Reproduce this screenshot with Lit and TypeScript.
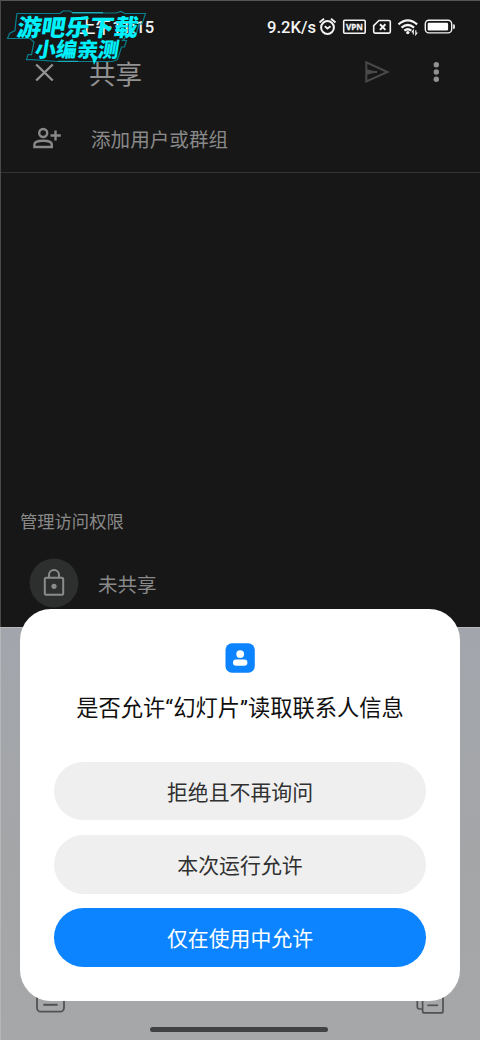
import { LitElement, html, css } from "lit";
import { customElement } from "lit/decorators.js";

@customElement("status-bar")
class StatusBar extends LitElement {
  static styles = css`
    :host { display: flex; height: 52px; box-sizing: border-box; padding: 0 24px 0 78px; align-items: center; justify-content: space-between; color: #f4f4f4; font: 500 16.6px/22px Roboto, "Noto Sans CJK SC", sans-serif; white-space: nowrap; }
    .right { display: flex; align-items: center; }
    .label { padding-top: 2px; }
    .icons { display: block; width: 140px; height: 24px; }
    .vpn { font: 700 9px "Noto Sans", sans-serif; }
  `;
  render() {
    return html`
      <span class="label">上午11:15</span>
      <div class="right">
        <span class="label">9.2K/s</span>
        <svg class="icons" viewBox="316 15 140 24" fill="none" stroke="#f4f4f4" stroke-width="1.6">
          <circle cx="327.5" cy="27.5" r="6.4" stroke-width="2" />
          <path d="M319.500 22.500l4.500-3.800M335.500 22.500l-4.500-3.800M324.800 26.300l2.700 2.200 3-2.200" stroke-width="1.800" />
          <rect x="343.7" y="20.200" width="21.5" height="13" rx="1" />
          <text class="vpn" x="346" y="30" textLength="17" lengthAdjust="spacingAndGlyphs" fill="#f4f4f4" stroke="#f4f4f4" stroke-width=".3">VPN</text>
          <path d="M379 20.5h10q1.3 0 1.3 1.3v10q0 1.3-1.3 1.3h-14q-1.3 0-1.3-1.3v-6.100z" />
          <path d="M380 24.300l5.400 5.600M385.400 24.300l-5.400 5.600" stroke-width="2" />
          <path d="M398.500 24.400q9.300-8.200 18.600 0M401.500 27.700q6.300-5.400 12.600 0M404.300 30.700q3.500-2.900 7 0" stroke-width="2.200" />
          <circle cx="407.8" cy="32.6" r="1.7" fill="#f4f4f4" stroke="none" />
          <path d="M413.3 34.6v-4.2l-1.5 2M415.8 30.3v4.2l1.5-2" stroke-width="1.1" />
          <rect x="425.3" y="20.3" width="26.4" height="12.6" rx="3.6" stroke-width="1.4" />
          <rect x="427.7" y="22.7" width="20.4" height="7.9" rx="1.3" fill="#fff" stroke="none" />
          <path d="M453 24.3q2 0 2 1v2.8q0 1-2 1z" fill="#d8d8d8" stroke="none" />
        </svg>
      </div>`;
  }
}

@customElement("share-page")
class SharePage extends LitElement {
  static styles = css`
    :host { display: flex; flex-direction: column; height: 627px; box-sizing: border-box; background: #171717; color: #898989; border-left: 1px solid #4a4a4a; border-top: 1px solid #555; font-family: "Noto Sans CJK SC", sans-serif; }
    svg { display: block; flex: none; }
    .bar { display: flex; height: 40px; align-items: center; padding: 0 31px 2px 32px; box-sizing: border-box; }
    .title { font-size: 26.6px; line-height: 38px; margin-left: 32px; padding-top: 2px; flex: 1; color: #929292; }
    .more { margin-left: 35px; }
    .add { display: flex; height: 80px; box-sizing: border-box; align-items: center; padding: 11px 32px 0; border-bottom: 1px solid #333; font-size: 19.6px; }
    .add span { margin-left: 29px; }
    .space { flex: 1; }
    .heading { padding-left: 19px; font-size: 17.3px; line-height: 26px; }
    .access { display: flex; align-items: center; height: 93px; box-sizing: border-box; padding: 5px 28px 0; font-size: 19.5px; }
    .access span { margin-left: 19px; padding-top: 1px; }
  `;
  render() {
    return html`
      <status-bar></status-bar>
      <div class="bar">
        <svg width="24" height="24" viewBox="0 0 24 24" stroke="#929292" stroke-width="2.4"><path d="M3.2 4.500l16.500 16M19.700 4.500l-16.500 16" /></svg>
        <span class="title">共享</span>
        <svg width="26" height="24" viewBox="0 0 26 24" fill="none" stroke="#494949" stroke-width="2"><path d="M2.3 2.400v19L23.5 12zM3 12h10" /><path d="M3 9.200l11 2.800-11 2.800z" fill="#494949" stroke="none" /></svg>
        <svg class="more" width="24" height="24" viewBox="0 0 24 24" fill="#929292"><circle cx="11.3" cy="4.800" r="2.7" /><circle cx="11.3" cy="12" r="2.7" /><circle cx="11.3" cy="19.300" r="2.7" /></svg>
      </div>
      <div class="add">
        <svg width="29" height="24" viewBox="33 126 29 24" fill="none" stroke="#898989" stroke-width="2.4"><circle cx="43.2" cy="133" r="4" /><path d="M34.4 147v-2.400c0-5.200 17.400-5.200 17.400 0v2.400zM55.500 130.500v10M50.500 135.500h10.300" /></svg>
        <span>添加用户或群组</span>
      </div>
      <div class="space"></div>
      <div class="heading">管理访问权限</div>
      <div class="access">
        <svg width="50" height="50" viewBox="0 0 50 50" fill="none" stroke="#8b8b8b" stroke-width="2"><circle cx="25" cy="25" r="24.4" fill="#2d2f2e" stroke="none" /><rect x="15.800" y="19.700" width="18.400" height="17" rx="1.5" /><path d="M20 19.500v-2.500a5 5 0 0 1 10 0v2.500" /><circle cx="25" cy="28.300" r="2.6" fill="#8b8b8b" stroke="none" /></svg>
        <span>未共享</span>
      </div>`;
  }
}

@customElement("permission-dialog")
class PermissionDialog extends LitElement {
  static styles = css`
    :host { display: flex; flex-direction: column; align-items: center; width: 440px; height: 392px; box-sizing: border-box; padding: 34px 34px; border-radius: 31px; background: #fff; font-family: "Noto Sans CJK SC", sans-serif; }
    svg { display: block; flex: none; }
    .question { margin: 16px 0 39px; font-size: 22.25px; line-height: 34px; font-weight: 400; color: #101010; white-space: nowrap; }
    .quote { font-family: Roboto, sans-serif; }
    .actions { display: flex; flex-direction: column; gap: 14.6px; width: 372px; }
    .action { display: block; height: 58.6px; padding: 0; border: 0; border-radius: 30px; background: #efefef; color: #303030; font: 400 20.9px/30px "Noto Sans CJK SC", sans-serif; }
    .primary { background: #0d84ff; color: #fff; }
    .actions { margin-top: -2.2px; }
  `;
  render() {
    return html`
      <svg width="30" height="30" viewBox="0 0 30 30"><rect x=".5" y=".3" width="29.3" height="29.4" rx="6.5" fill="#0d84ff" /><circle cx="15.2" cy="11.1" r="3.9" fill="#fff" /><rect x="8" y="16.6" width="14.4" height="6.1" rx="3" fill="#fff" /></svg>
      <div class="question">是否允许<span class="quote">“</span>幻灯片<span class="quote">”</span>读取联系人信息</div>
      <div class="actions">
        <button class="action">拒绝且不再询问</button>
        <button class="action">本次运行允许</button>
        <button class="action primary">仅在使用中允许</button>
      </div>`;
  }
}

@customElement("app-root")
class AppRoot extends LitElement {
  static styles = css`
    :host { display: block; position: relative; width: 480px; height: 1040px; overflow: hidden; background: #a5a6a8; }
    .keyboard { display: flex; flex-direction: column; justify-content: flex-end; height: 413px; box-sizing: border-box; border-left: 1px solid #b5b6b7; border-top: 1px solid #b7b9bc; background: linear-gradient(#a2a6ac, #a4a5a7 55%, #a6a7a9); }
    .keys { display: flex; justify-content: space-between; padding: 0 34px; height: 28px; }
    .home { width: 178px; height: 5px; margin: 12px auto 8px 149px; border-radius: 3px; background: #414244; }
    .dialog { position: absolute; left: 20px; top: 609px; }
    .mark { position: absolute; left: 0; top: 0; }
    .mark text { font-family: "Noto Sans CJK SC", sans-serif; font-weight: 900; fill: #00f1fc; }
  `;
  render() {
    return html`
      <share-page></share-page>
      <div class="keyboard">
        <div class="keys">
          <svg width="32" height="28" viewBox="35 986 32 28" fill="none" stroke="#515253" stroke-width="1.8"><rect x="37" y="988" width="27" height="22.7" rx="4" /><path d="M43.3 1003.8h14.3" stroke-width="2" /></svg>
          <svg width="32" height="28" viewBox="414 986 32 28" fill="none" stroke="#515253" stroke-width="1.7"><path d="M422 1008h-2.5q-2.2 0-2.2-2.2V990" /><rect x="422.6" y="988" width="20.4" height="23.9" rx="2" /><path d="M427.3 1004.3h10.8" /></svg>
        </div>
        <div class="home"></div>
      </div>
      <permission-dialog class="dialog"></permission-dialog>
      <svg class="mark" width="160" height="70" viewBox="0 0 160 70">
        <path d="M17 13.5h43l3-2.5h7l3 2h43l5-1.5 4 2h20.5L142 24h-3l-3.5 12.5h-9l-4 4h4l-2 6.5h-3l-4 12.5-5 2H58l-26-1.8h-5.500l1.500-5h3.500L34 42l-4-3.500H7.500l2-5 5.500-3 1-10z" fill="none" stroke="#087f8d" stroke-width="1.200" />
        <path d="M72 12.700h31M58 61.300h20" stroke="#16aebb" stroke-width="1.200" />
        <text transform="translate(16 35.600) skewX(-9)" font-size="23.500" textLength="121" lengthAdjust="spacingAndGlyphs">游吧乐下载</text>
        <text transform="translate(34 57.300) skewX(-9)" font-size="20.500" textLength="84" lengthAdjust="spacingAndGlyphs">小编亲测</text>
        <path d="M91 54l3 11 4-8" fill="#00e9f5" />
      </svg>`;
  }
}
